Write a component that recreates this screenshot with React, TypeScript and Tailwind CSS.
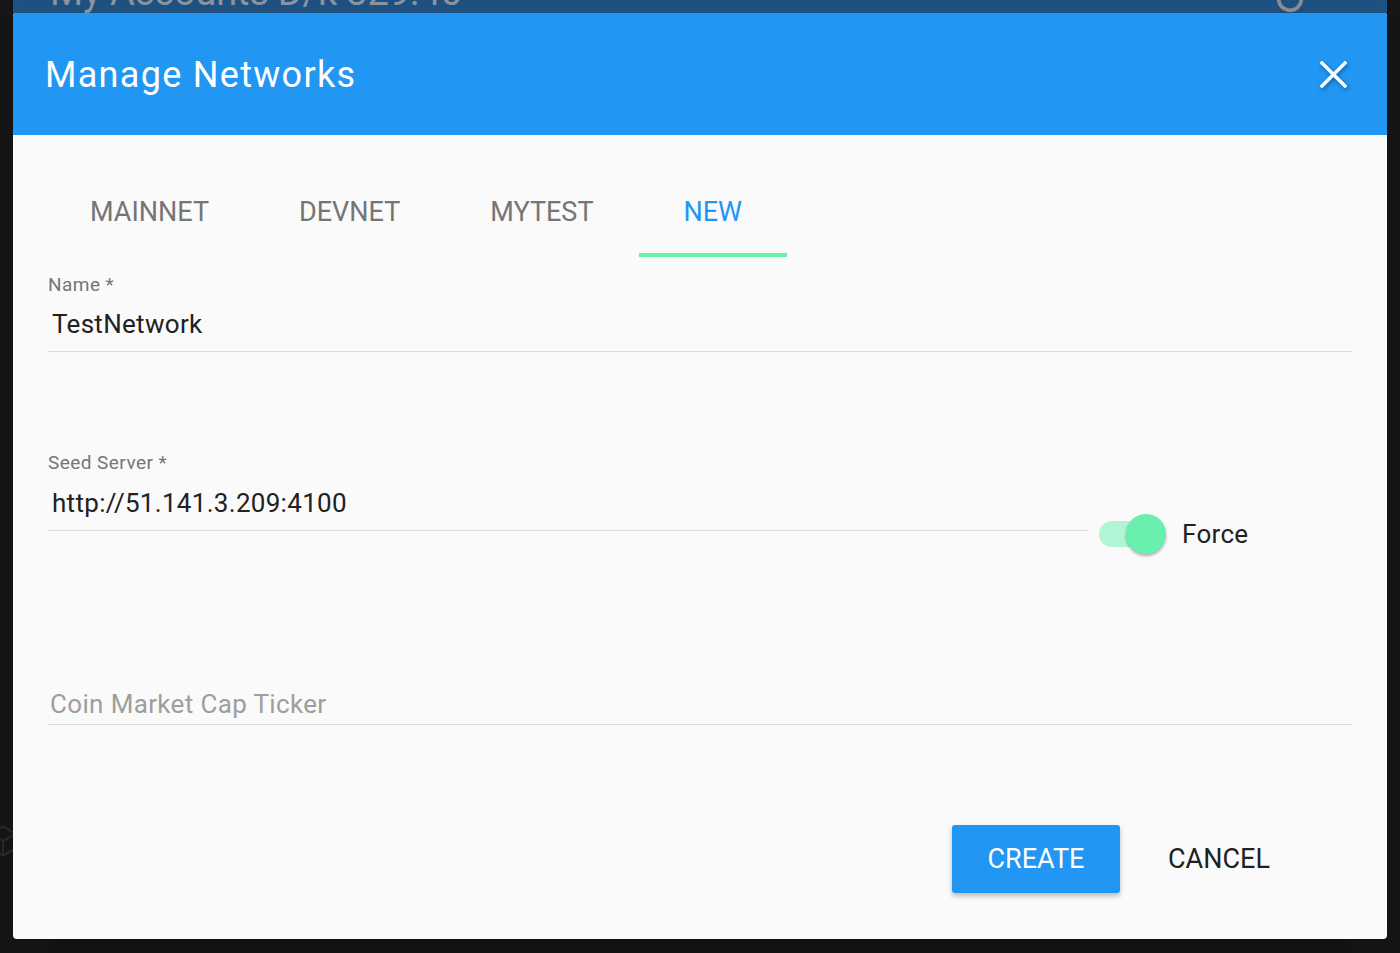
import React from "react";
import { RotateCw, Box } from "lucide-react";

export default function App() {
  return (
    <div className="relative h-[953px] w-[1400px] overflow-hidden bg-[#161618] font-['Roboto',sans-serif]">
      {/* background app */}
      <div className="flex h-full">
        <div className="relative w-[13px] shrink-0">
          <Box className="absolute left-[-14px] top-[824px] h-[34px] w-[34px] text-[#2a2a2e]" strokeWidth={1.5} />
        </div>
        <div className="flex h-[60px] w-[1374px] items-start justify-between bg-[#1f5182] pl-[37px]">
          <div className="mt-[-30px] text-[38px] leading-[44px] tracking-[-0.2px] text-[#8b96a2]">My Accounts D/k 329.40</div>
          <RotateCw className="mr-[82px] mt-[-16px] h-[30px] w-[30px] -scale-x-100 rotate-[120deg] text-[#8a8f96]" strokeWidth={3} />
        </div>
      </div>

      {/* dialog */}
      <div className="absolute left-[13px] top-[13px] flex h-[926px] w-[1374px] flex-col overflow-hidden rounded-[4px] bg-[#fafafa] shadow-2xl">
        <div className="flex h-[122px] shrink-0 items-center justify-between bg-[#2196f3] pl-[32px] pr-[40px]">
          <div className="mt-[2px] text-[36px] leading-[44px] tracking-[1.3px] text-white">Manage Networks</div>
          <svg width="27" height="27" viewBox="0 0 27 27" className="drop-shadow-[1px_2px_2px_rgba(0,0,0,0.35)]">
            <path d="M2 2 L25 25 M25 2 L2 25" stroke="white" strokeWidth="3.4" strokeLinecap="square" />
          </svg>
        </div>

        <div className="flex flex-1 flex-col px-[35px]">
          {/* tabs */}
          <div className="ml-[-3px] mt-[32px] flex h-[90px]">
            {["MAINNET", "DEVNET", "MYTEST", "NEW"].map((t) => {
              const active = t === "NEW";
              return (
                <div
                  key={t}
                  className={
                    active
                      ? "flex items-center border-b-[4px] border-[#69f0ae] px-[45px] pt-[5px] text-[27px] text-[#2196f3]"
                      : "flex items-center border-b-[4px] border-transparent px-[45px] pt-[5px] text-[27px] text-[#757575]"
                  }
                >
                  {t}
                </div>
              );
            })}
          </div>

          {/* Name */}
          <div className="mt-[17px] flex flex-col">
            <div className="text-[19px] leading-[22px] tracking-[0.45px] text-[#757575]">Name *</div>
            <div className="border-b border-[#dcdcdc] pb-[9px] pl-[4px] pt-[10px] text-[26px] leading-[36px] tracking-[0.3px] text-[#212121]">
              TestNetwork
            </div>
          </div>

          {/* Seed Server */}
          <div className="mt-[100px] flex items-start">
            <div className="flex flex-1 flex-col">
              <div className="text-[19px] leading-[22px] tracking-[0.45px] text-[#757575]">Seed Server *</div>
              <div className="border-b border-[#dcdcdc] pb-[9px] pl-[4px] pt-[11px] text-[26px] leading-[36px] tracking-[0.3px] text-[#212121]">
                http://51.141.3.209:4100
              </div>
            </div>
            <div className="ml-[11px] mt-[62px] flex h-[40px] w-[253px] items-center">
              <div className="relative h-[40px] w-[67px]">
                <div className="absolute left-0 top-[7px] h-[26px] w-[60px] rounded-full bg-[#b2f5d4]" />
                <div className="absolute left-[27px] top-0 h-[40px] w-[40px] rounded-full bg-[#69f0ae] shadow-[0_2px_3px_rgba(0,0,0,0.3)]" />
              </div>
              <div className="ml-[16px] text-[26px] leading-[36px] tracking-[0.3px] text-[#212121]">Force</div>
            </div>
          </div>

          {/* Ticker */}
          <div className="mt-[132px] border-b border-[#dcdcdc] pb-[2px] pl-[2px] text-[26px] leading-[36px] tracking-[0.35px] text-[#9e9e9e]">
            Coin Market Cap Ticker
          </div>

          {/* buttons */}
          <div className="mr-[49px] mt-[100px] flex justify-end gap-[15px]">
            <div className="flex h-[68px] w-[168px] items-center justify-center rounded-[3px] bg-[#2196f3] text-[27px] text-white shadow-[0_3px_5px_rgba(0,0,0,0.25)]">
              CREATE
            </div>
            <div className="flex h-[68px] w-[168px] items-center justify-center text-[27px] text-[#212121]">
              CANCEL
            </div>
          </div>
        </div>
      </div>
    </div>
  );
}
